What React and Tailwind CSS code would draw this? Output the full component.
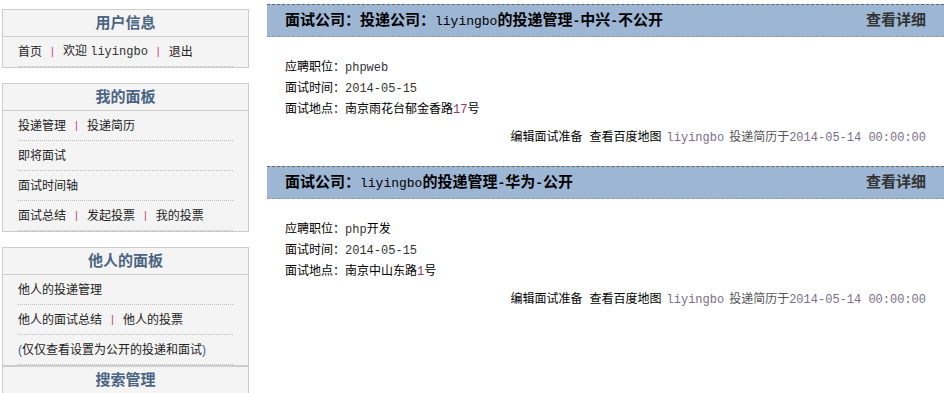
import React from 'react';

const cn = "font-['Liberation_Sans','Noto_Sans_CJK_SC',sans-serif]";
const mono = "font-['Liberation_Mono','Noto_Sans_CJK_SC',monospace]";

function Sep() {
  return <span className="mx-[9px] text-[#c0457f] text-[11px]">|</span>;
}

function Row({ children }) {
  return (
    <div className="mx-[15px] h-[30px] border-b border-dotted border-[#bbb] flex items-center text-[12px] text-[#222]">
      {children}
    </div>
  );
}

function SideBox({ title, children, className = '' }) {
  return (
    <div className={`border border-[#ccc] bg-[#f4f4f4] ${className}`}>
      <div className="h-[27px] border-b border-[#ccc] flex items-center justify-center text-[15px] font-bold text-[#4b6483]">
        {title}
      </div>
      {children}
    </div>
  );
}

function Card({ title, job, date, place, num, className = '' }) {
  return (
    <div className={className}>
      <div className="h-[33px] border-t border-[#666] border-b border-dashed border-b-[#999] bg-[#9db6d4] flex items-center justify-between px-[18px] text-[15px] font-bold">
        <span className="text-black">{title}</span>
        <span className="text-[#333]">查看详细</span>
      </div>
      <div className="pt-[20px] pl-[18px] text-[12px] leading-[20px] text-black">
        <div>应聘职位：{job}</div>
        <div>面试时间：<span className={`${mono} text-[#333]`}>{date}</span></div>
        <div>面试地点：{place}<span className={`${mono} text-[#a0306a]`}>{num}</span>号</div>
      </div>
      <div className="mt-[7px] pr-[18px] text-right text-[12px] leading-[20px]">
        <span className="text-black">编辑面试准备</span>
        <span className="ml-[7px] text-black">查看百度地图</span>
        <span className={`${mono} ml-[5px] text-[#7a6e88]`}>liyingbo</span>
        <span className="ml-[5px] text-[#555]">投递简历于</span>
        <span className={`${mono} text-[#7a6e88]`}>2014-05-14 00:00:00</span>
      </div>
    </div>
  );
}

export default function App() {
  return (
    <div className={`${cn} w-[944px] h-[393px] overflow-hidden bg-white flex`}>
      {/* sidebar */}
      <div className="w-[247px] ml-[2px] mt-[9px] shrink-0">
        <SideBox title="用户信息">
          <Row>
            <span>首页</span>
            <Sep />
            <span>欢迎 <span className={`${mono} text-[#333]`}>liyingbo</span></span>
            <Sep />
            <span>退出</span>
          </Row>
        </SideBox>

        <SideBox title="我的面板" className="mt-[15px]">
          <Row>
            <span>投递管理</span>
            <Sep />
            <span>投递简历</span>
          </Row>
          <Row>即将面试</Row>
          <Row>面试时间轴</Row>
          <Row>
            <span>面试总结</span>
            <Sep />
            <span>发起投票</span>
            <Sep />
            <span>我的投票</span>
          </Row>
        </SideBox>

        <SideBox title="他人的面板" className="mt-[15px]">
          <Row>他人的投递管理</Row>
          <Row>
            <span>他人的面试总结</span>
            <Sep />
            <span>他人的投票</span>
          </Row>
          <Row>
            <span className="text-[#3a5a9a]">(</span>仅仅查看设置为公开的投递和面试<span className="text-[#3a5a9a]">)</span>
          </Row>
        </SideBox>

        <SideBox title="搜索管理" />
      </div>

      {/* main */}
      <div className="flex-1 ml-[18px] mt-[4px]">
        <Card
          title={<>面试公司：投递公司：<span className={`${mono} font-normal text-[13px]`}>liyingbo</span>的投递管理<span className={`${mono} text-[13px]`}>-</span>中兴<span className={`${mono} text-[13px]`}>-</span>不公开</>}
          job={<span className={`${mono} text-[#333]`}>phpweb</span>}
          date="2014-05-15"
          place="南京雨花台郁金香路"
          num="17"
        />
        <Card
          className="mt-[18px]"
          title={<>面试公司：<span className={`${mono} font-normal text-[13px]`}>liyingbo</span>的投递管理<span className={`${mono} text-[13px]`}>-</span>华为<span className={`${mono} text-[13px]`}>-</span>公开</>}
          job={<><span className={`${mono} text-[#333]`}>php</span>开发</>}
          date="2014-05-15"
          place="南京中山东路"
          num="1"
        />
      </div>
    </div>
  );
}
